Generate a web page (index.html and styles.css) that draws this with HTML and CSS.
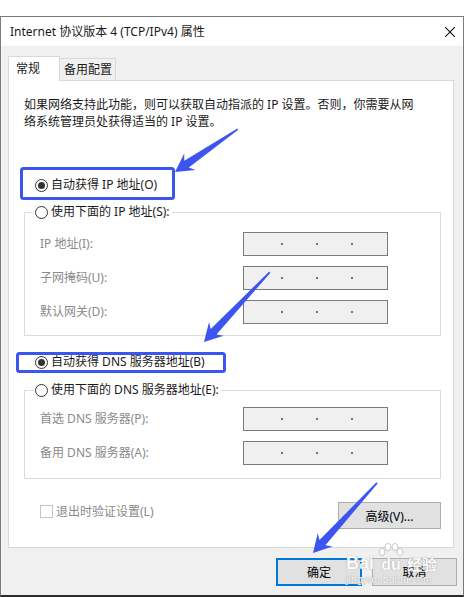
FILE: index.html
```html
<!DOCTYPE html>
<html lang="zh-CN">
<head>
    <meta charset="UTF-8">
    <title>Internet 协议版本 4 (TCP/IPv4) 属性</title>
    <link rel="stylesheet" href="styles.css">
</head>
<body>
<div class="window">
    <div class="titlebar">
        <span class="title">Internet 协议版本 4 (TCP/IPv4) 属性</span>
        <svg class="close" width="10" height="10" viewBox="0 0 10 10"><path d="M0 0L10 10M10 0L0 10" stroke="#111" stroke-width="1.1"/></svg>
    </div>
    <div class="content">
        <div class="tabs">
            <div class="tab active">常规</div>
            <div class="tab">备用配置</div>
        </div>
        <div class="panel">
            <p class="desc">如果网络支持此功能，则可以获取自动指派的 IP 设置。否则，你需要从网<br>络系统管理员处获得适当的 IP 设置。</p>

            <div class="option opt-ip"><span class="radio checked"></span>自动获得 IP 地址(O)</div>
            <fieldset class="group ip-group">
                <legend><span class="radio"></span>使用下面的 IP 地址(S):</legend>
                <div class="field"><span class="field-label">IP 地址(I):</span><span class="ipbox"><i></i><i></i><i></i></span></div>
                <div class="field"><span class="field-label">子网掩码(U):</span><span class="ipbox"><i></i><i></i><i></i></span></div>
                <div class="field"><span class="field-label">默认网关(D):</span><span class="ipbox"><i></i><i></i><i></i></span></div>
            </fieldset>

            <div class="option opt-dns"><span class="radio checked"></span>自动获得 DNS 服务器地址(B)</div>
            <fieldset class="group dns-group">
                <legend><span class="radio"></span>使用下面的 DNS 服务器地址(E):</legend>
                <div class="field"><span class="field-label">首选 DNS 服务器(P):</span><span class="ipbox"><i></i><i></i><i></i></span></div>
                <div class="field"><span class="field-label">备用 DNS 服务器(A):</span><span class="ipbox"><i></i><i></i><i></i></span></div>
            </fieldset>

            <div class="footer">
                <div class="check"><span class="checkbox"></span>退出时验证设置(L)</div>
                <button class="btn advanced">高级(V)...</button>
            </div>
        </div>
        <div class="buttons">
            <button class="btn ok">确定</button>
            <button class="btn">取消</button>
        </div>
    </div>
</div>

<!-- annotation marks drawn over the dialog -->
<svg class="marks" width="465" height="597" viewBox="0 0 465 597">
    <rect x="21.5" y="168.5" width="152" height="30" rx="2" fill="none" stroke="#3d55f0" stroke-width="3"/>
    <rect x="17.5" y="353.5" width="207" height="18" rx="2" fill="none" stroke="#3d55f0" stroke-width="3"/>
    <g fill="#3d55f0">
        <polygon transform="translate(175 172) rotate(-34.3)" points="0,0 18,-10 14,-4 76,-0.8 76,0.8 14,4 18,10"/>
        <polygon transform="translate(204 342) rotate(-46.7)" points="0,0 18,-10 14,-4 96,-0.8 96,0.8 14,4 18,10"/>
        <polygon transform="translate(313 553) rotate(-47.6)" points="0,0 18,-10 14,-4 95,-0.8 95,0.8 14,4 18,10"/>
    </g>
</svg>

<div class="watermark">
    <div class="wm-top">
        <span class="wm-bai">Bai</span>
        <span class="wm-paw">
            <svg width="26" height="14" viewBox="0 0 26 14">
                <ellipse cx="4" cy="9" rx="3" ry="3.6"/>
                <ellipse cx="10" cy="4" rx="3" ry="3.6"/>
                <ellipse cx="17" cy="4" rx="3" ry="3.6"/>
                <ellipse cx="22" cy="9" rx="3" ry="3.6"/>
            </svg>
            <span class="wm-du">du</span>
        </span>
        <span class="wm-jy">经验</span>
    </div>
    <div class="wm-url">jingyan.baidu.com</div>
</div>
</body>
</html>
```

FILE: styles.css
```css
* {
    box-sizing: border-box;
}

body {
    margin: 0;
    background: #fff;
    font-family: "Noto Sans", "Noto Sans CJK SC", sans-serif;
    font-size: 12px;
    color: #1a1a1a;
}

.window {
    margin-top: 16px;
    width: 464px;
    height: 581px;
    border: 1px solid #7a7a7a;
    border-bottom: 2px solid #2b2b2b;
    background: #f0f0f0;
    display: flex;
    flex-direction: column;
}

.titlebar {
    height: 29px;
    background: #fff;
    display: flex;
    align-items: center;
    justify-content: space-between;
    padding: 0 8px 0 9px;
    line-height: 16px;
}

.content {
    padding: 10px 6px 0 7px;
}

/* tabs */
.tabs {
    display: flex;
    align-items: flex-end;
    height: 24px;
}

.tab {
    height: 22px;
    width: 56px;
    padding-left: 4px;
    line-height: 22px;
    border: 1px solid #d9d9d9;
    border-left: none;
    border-bottom: none;
    background: #f0f0f0;
}

.tab.active {
    position: relative;
    z-index: 1;
    width: 52px;
    height: 25px;
    margin-bottom: -1px;
    padding-left: 7px;
    line-height: 24px;
    border-left: 1px solid #d9d9d9;
    background: #fff;
}

.panel {
    width: 446px;
    height: 468px;
    background: #fff;
    border: 1px solid #d9d9d9;
    padding: 15px 12px 0 15px;
}

.desc {
    margin: 0;
    line-height: 17px;
    white-space: nowrap;
}

/* radio options */
.option, legend {
    display: flex;
    align-items: center;
    gap: 3px;
    height: 16px;
    line-height: 16px;
    white-space: nowrap;
}

.option {
    margin-left: 11px;
}

.opt-ip {
    margin-top: 47px;
}

.opt-dns {
    margin-top: 18px;
}

.radio {
    width: 13px;
    height: 13px;
    border: 1px solid #333;
    border-radius: 50%;
    background: #fff;
    display: flex;
    align-items: center;
    justify-content: center;
}

.radio.checked::after {
    content: "";
    width: 7px;
    height: 7px;
    border-radius: 50%;
    background: #333;
}

/* group boxes */
.group {
    margin: 11px 0 0;
    border: 1px solid #dcdcdc;
    padding: 12px 0 11px 15px;
    min-width: 0;
}

.dns-group {
    margin-top: 12px;
    padding-top: 9px;
    padding-bottom: 13px;
}

legend {
    padding: 0 2px;
    margin-left: -7px;
}

.field {
    display: grid;
    grid-template-columns: 203px 145px;
    height: 24px;
    line-height: 24px;
}

.field + .field {
    margin-top: 10px;
}

.field-label {
    color: #8a8a8a;
}

.ipbox {
    border: 1px solid #7a7a7a;
    background: #f0f0f0;
    display: flex;
    align-items: center;
    justify-content: center;
    gap: 33px;
    padding-left: 3px;
}

.ipbox i {
    width: 2px;
    height: 2px;
    background: #6b7785;
}

/* bottom of panel */
.footer {
    display: flex;
    justify-content: space-between;
    align-items: flex-start;
    margin-top: 23px;
    padding-left: 16px;
}

.check {
    display: flex;
    align-items: center;
    gap: 3px;
    height: 16px;
    margin-top: 1px;
    color: #8a8a8a;
}

.checkbox {
    width: 13px;
    height: 13px;
    border: 1px solid #c4c4c4;
    background: #fff;
}

.btn {
    font: inherit;
    color: #000;
    background: #e1e1e1;
    border: 1px solid #adadad;
    padding: 0;
    width: 85px;
    height: 28px;
}

.advanced {
    width: 103px;
    height: 27px;
}

.buttons {
    display: flex;
    justify-content: flex-end;
    gap: 10px;
    margin-top: 10px;
}

.btn.ok {
    width: 86px;
    border: 2px solid #0078d7;
}

/* overlays */
.marks {
    position: absolute;
    top: 0;
    left: 0;
    pointer-events: none;
}

.watermark {
    position: absolute;
    left: 346px;
    top: 541px;
    color: #fff;
    text-shadow: 0 0 1px #9a9a9a, 0 0 1px #b0b0b0;
    opacity: 0.9;
    pointer-events: none;
}

.wm-top {
    display: flex;
    align-items: flex-end;
    height: 32px;
}

.wm-bai {
    font-family: "Liberation Sans", sans-serif;
    font-weight: bold;
    font-size: 18px;
    line-height: 18px;
    margin-bottom: 1px;
}

.wm-paw {
    display: flex;
    flex-direction: column;
    align-items: center;
    margin-left: 4px;
}

.wm-paw svg {
    fill: #fff;
    stroke: #b8b8b8;
    stroke-width: 0.8;
}

.wm-du {
    font-family: "Liberation Sans", sans-serif;
    font-weight: bold;
    font-size: 16px;
    line-height: 16px;
}

.wm-jy {
    font-family: "Noto Sans CJK SC", sans-serif;
    font-weight: bold;
    font-size: 15px;
    line-height: 18px;
    margin-left: 3px;
}

.wm-url {
    font-family: "Liberation Sans", sans-serif;
    font-size: 10px;
    line-height: 12px;
    margin-top: 1px;
    letter-spacing: 0.3px;
}
```
